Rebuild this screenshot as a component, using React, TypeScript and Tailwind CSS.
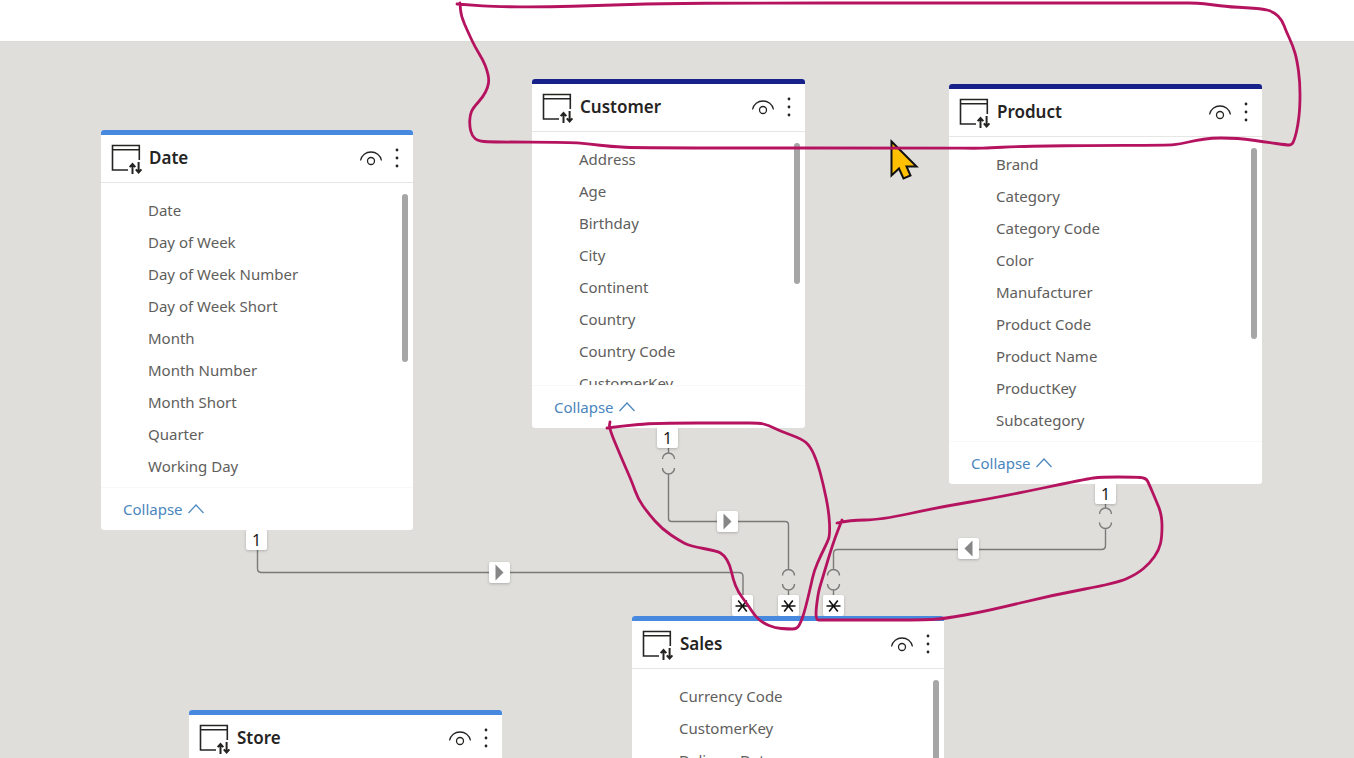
type TableNode = {
  name: string;
  fields: string[];
  place: string;
  accent: string;
  thumb: string;
};

const tables: TableNode[] = [
  {
    name: 'Date',
    fields: ['Date', 'Day of Week', 'Day of Week Number', 'Day of Week Short', 'Month', 'Month Number', 'Month Short', 'Quarter', 'Working Day'],
    place: 'left-[101px] top-[89px] w-[312px] h-[400px]',
    accent: 'bg-[#4689df]',
    thumb: 'h-[168px]',
  },
  {
    name: 'Customer',
    fields: ['Address', 'Age', 'Birthday', 'City', 'Continent', 'Country', 'Country Code', 'CustomerKey'],
    place: 'left-[532px] top-[38px] w-[273px] h-[349px]',
    accent: 'bg-[#17218a]',
    thumb: 'h-[141px]',
  },
  {
    name: 'Product',
    fields: ['Brand', 'Category', 'Category Code', 'Color', 'Manufacturer', 'Product Code', 'Product Name', 'ProductKey', 'Subcategory'],
    place: 'left-[949px] top-[43px] w-[313px] h-[400px]',
    accent: 'bg-[#17218a]',
    thumb: 'h-[191px]',
  },
  {
    name: 'Sales',
    fields: ['Currency Code', 'CustomerKey', 'Delivery Date'],
    place: 'left-[632px] top-[575px] w-[312px] h-[400px]',
    accent: 'bg-[#4689df]',
    thumb: 'h-[168px]',
  },
  {
    name: 'Store',
    fields: [],
    place: 'left-[189px] top-[669px] w-[313px] h-[400px]',
    accent: 'bg-[#4689df]',
    thumb: 'h-[168px]',
  },
];

type Point = [number, number];

const headerLoop: Point[] = [
  [457, 4], [470, 5], [495, 6.7], [545, 7], [600, 5.5], [660, 3.5], [750, 3], [900, 3], [1180, 3], [1198, 3], [1210, 4.5], [1230, 7],
  [1262, 8.5], [1274, 12], [1282, 20], [1286, 31], [1293, 46], [1297, 60], [1300, 82], [1300, 107], [1298, 125],
  [1295, 138], [1292, 145], [1287, 145], [1265, 142], [1245, 139], [1230, 138], [1212, 138], [1195, 140.5], [1180, 144],
  [1168, 145.3], [1080, 145.5], [1050, 146], [1015, 146.5], [990, 148], [975, 148.3], [950, 148], [640, 148],
  [610, 146.5], [590, 144], [570, 142.3], [490, 142], [478, 141], [472, 136], [469.5, 126], [470, 115], [473, 108], [483, 97],
  [488, 87], [489, 79], [487, 70], [483, 60], [475, 47], [468, 32], [461, 16], [460, 3],
];

const customerLoop: Point[] = [
  [607, 428], [622, 426], [655, 423], [740, 423], [759, 423], [768, 425], [780, 431], [802, 439], [810, 446], [817, 461], [823, 483],
  [829, 512], [830, 535], [827, 543], [821, 555], [814, 571], [811, 585], [805, 610], [801, 622], [797, 629],
  [788, 629], [775, 628], [763, 623], [755, 616], [748, 605], [738, 592], [733, 579], [730, 565], [724, 555],
  [717, 551], [690, 546], [680, 541], [662, 529], [648, 513], [638, 499], [632, 482], [621, 457], [609, 428], [610, 422],
];

const productLoop: Point[] = [
  [837, 523], [850, 520], [880, 520], [940, 507], [1000, 497], [1086, 479], [1101, 477], [1135, 477], [1146, 478], [1149, 484],
  [1155, 498], [1162, 515], [1162, 537], [1159, 550], [1150, 563], [1137, 574], [1117, 583], [1053, 595],
  [987, 611], [943, 619], [920, 620], [822, 620], [815, 620], [818, 593], [822, 580], [833, 543], [842, 520],
];

/** Rounds a list of points into one smooth stroke through the segment midpoints. */
function smooth(points: Point[]) {
  const [first, ...rest] = points;
  const last = rest[rest.length - 1];
  let d = `M${first[0]} ${first[1]}`;
  for (let i = 0; i < rest.length - 1; i++) {
    const [x, y] = rest[i];
    const [nx, ny] = rest[i + 1];
    d += ` Q${x} ${y} ${(x + nx) / 2} ${(y + ny) / 2}`;
  }
  return `${d} L${last[0]} ${last[1]}`;
}

function TableIcon() {
  return (
    <svg className="size-8 shrink-0" viewBox="0 0 32 32" fill="none" stroke="#252423" strokeWidth="1.6" aria-hidden="true">
      <path d="M17 26H1.5V1.5H28.3V16M1.5 5.7H28.3" />
      <path d="M21.5 30V20M18.7 23.2l2.8-3.2 2.8 3.2M27.6 18v10.5M24.8 25.3l2.8 3.2 2.8-3.2" strokeWidth="2" />
    </svg>
  );
}

function EyeIcon() {
  return (
    <svg className="h-4 w-6" viewBox="0 0 24 16" fill="none" stroke="#252423" strokeWidth="1.3" aria-hidden="true">
      <path d="M1.5 10.5C2.5 5 7 2 12 2s9.5 3 10.5 8.5" />
      <circle cx="12" cy="11" r="3.5" />
    </svg>
  );
}

function MoreIcon() {
  return (
    <svg className="h-5 w-1" viewBox="0 0 4 20" fill="#252423" aria-hidden="true">
      <circle cx="2" cy="2" r="1.4" />
      <circle cx="2" cy="10" r="1.4" />
      <circle cx="2" cy="18" r="1.4" />
    </svg>
  );
}

function TableCard({ table }: { table: TableNode }) {
  return (
    <section className={`absolute flex flex-col overflow-hidden rounded-[3px] bg-white ${table.place}`}>
      <div className={`h-[5px] shrink-0 ${table.accent}`} />
      <header className="flex h-12 shrink-0 items-center border-b border-[#e6e6e4] pr-[14px] pb-[2px] pl-[10px]">
        <div className="pt-1">
          <TableIcon />
        </div>
        <h2 className="ml-[6px] flex-1 text-[17px] leading-6 font-semibold text-[#252423]">{table.name}</h2>
        <button type="button" aria-label={`Show or hide ${table.name}`} className="mr-3">
          <EyeIcon />
        </button>
        <button type="button" aria-label={`More options for ${table.name}`}>
          <MoreIcon />
        </button>
      </header>
      <div className="flex min-h-0 flex-1 items-start overflow-hidden pt-[11px] pr-[5px] pl-[47px]">
        <ul className="flex-1 text-[15px] leading-8 text-[#605e5c]">
          {table.fields.map((field) => (
            <li key={field}>{field}</li>
          ))}
        </ul>
        <div className={`w-[6px] shrink-0 rounded-full bg-[#a6a6a6] ${table.thumb}`} />
      </div>
      <footer className="flex h-[43px] shrink-0 items-center border-t border-[#f8f8f7] pl-[22px]">
        <button type="button" className="flex items-center gap-1 text-[15px] leading-6 text-[#4a86bd]">
          Collapse
          <svg className="h-3 w-[18px]" viewBox="0 0 18 12" fill="none" stroke="currentColor" strokeWidth="1.2" aria-hidden="true">
            <path d="M1.5 10L9 2l7.5 8" />
          </svg>
        </button>
      </footer>
    </section>
  );
}

const badge = 'absolute flex size-[21px] items-center justify-center rounded-[2px] bg-white shadow-[0_1px_3px_rgba(0,0,0,0.22)]';

function One({ place }: { place: string }) {
  return <div className={`${badge} text-base leading-5 text-[#1b1a19] ${place}`}>1</div>;
}

function Many({ place }: { place: string }) {
  return (
    <div className={`${badge} ${place}`}>
      <svg className="size-[17px]" viewBox="0 0 17 17" stroke="#111" strokeWidth="1.6" role="img" aria-label="Many">
        <path d="M1.5 9H15.5M4.2 3.5l8.6 11M12.8 3.5l-8.6 11" />
      </svg>
    </div>
  );
}

function Direction({ place, left = false }: { place: string; left?: boolean }) {
  return (
    <div className={`${badge} ${place}`}>
      <svg className="size-[17px]" viewBox="0 0 17 17" fill="#868686" aria-hidden="true">
        <path d={left ? 'M12.5 0.5V16.5L4.5 8.5z' : 'M4.5 0.5V16.5L12.5 8.5z'} />
      </svg>
    </div>
  );
}

export default function App() {
  return (
    <div className="relative flex h-screen flex-col overflow-hidden bg-white font-['Noto_Sans','Open_Sans',sans-serif]">
      <div className="h-[41px] shrink-0" />
      <main className="relative min-h-0 flex-1 overflow-hidden border-t border-[#d9d9d6] bg-[#dfdeda]">
        <div className="absolute -top-px left-0">
          <svg className="absolute top-0 left-0 h-[717px] w-[1354px]" viewBox="0 41 1354 717" fill="none" stroke="#7a7a78" strokeWidth="1.4" aria-hidden="true">
            <path d="M257.5 549V568.5Q257.5 572.5 261.5 572.5H739Q743 572.5 743 576.5V597" />
            <path d="M668.5 447V453M662.5 459a6 6 0 0 1 12 0M662.5 468a6 6 0 0 0 12 0M668.5 474V518.5Q668.5 521.5 671.5 521.5H785Q788.5 521.5 788.5 525V569.5M782.5 575.5a6 6 0 0 1 12 0M782.5 584a6 6 0 0 0 12 0M788.5 590V597" />
            <path d="M1105.5 502V508M1099.5 514a6 6 0 0 1 12 0M1099.5 522.5a6 6 0 0 0 12 0M1105.5 528.5V545.5Q1105.5 549.5 1101.5 549.5H837.5Q833.5 549.5 833.5 553.5V569.5M827.5 575.5a6 6 0 0 1 12 0M827.5 584a6 6 0 0 0 12 0M833.5 590V597" />
          </svg>
          <One place="left-[246px] top-[488px]" />
          <One place="left-[657px] top-[386px]" />
          <One place="left-[1095px] top-[442px]" />
          <Direction place="left-[489px] top-[521px]" />
          <Direction place="left-[717px] top-[470px]" />
          <Direction place="left-[958px] top-[497px]" left />
          <Many place="left-[732px] top-[554px]" />
          <Many place="left-[778px] top-[554px]" />
          <Many place="left-[823px] top-[554px]" />
          {tables.map((table) => (
            <TableCard key={table.name} table={table} />
          ))}
        </div>
      </main>
      <svg className="pointer-events-none absolute top-0 left-0 h-[758px] w-[1354px]" viewBox="0 0 1354 758" fill="none" aria-hidden="true">
        <path d="M891.5 141.5V175.5L899 168.5L903.5 178.5L910.5 175.5L906.5 166.5H916.5z" fill="#ffc000" stroke="#111" strokeWidth="2" />
        <g stroke="#b5135f" strokeWidth="2.8" strokeLinecap="round" strokeLinejoin="round">
          <path d={smooth(headerLoop)} />
          <path d={smooth(customerLoop)} />
          <path d={smooth(productLoop)} />
        </g>
      </svg>
    </div>
  );
}
